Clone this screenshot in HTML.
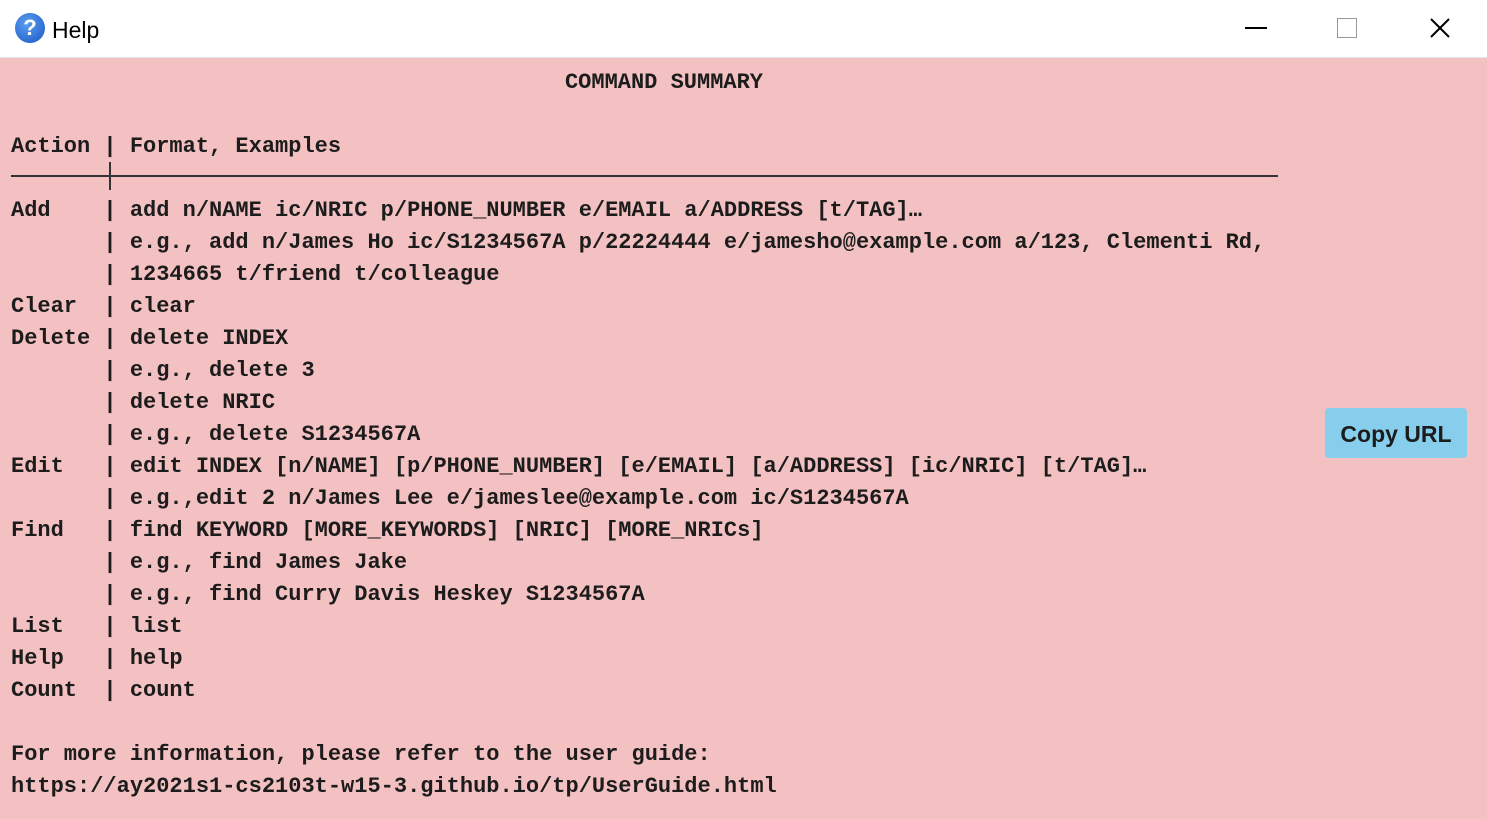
<!DOCTYPE html>
<html><head><meta charset="utf-8"><style>
body{margin:0;width:1487px;height:819px;overflow:hidden;background:#f3c1c2;font-family:"Liberation Sans",sans-serif;position:relative}
.tb{position:absolute;left:0;top:0;width:1487px;height:57px;background:#fff;border-bottom:1px solid #e6e6e6}
.tb .t{position:absolute;left:52px;top:17px;font-size:23px;color:#000}
.ic{position:absolute;left:15px;top:13px;width:30px;height:30px;border-radius:50%;background:radial-gradient(circle at 40% 35%,#5a9ff0,#1a56c4);color:#fff;font-weight:bold;font-size:22px;text-align:center;line-height:30px}
pre{position:absolute;left:11px;top:67px;margin:0;font-family:"Liberation Mono",monospace;font-weight:bold;font-size:22px;line-height:32px;color:#1c1c1c}
.ttl{position:absolute;top:67px;left:0;width:1328px;text-align:center;font-family:"Liberation Mono",monospace;font-weight:bold;font-size:22px;line-height:32px;color:#1c1c1c}
.hl{position:absolute;left:11px;top:175px;width:1267px;height:2px;background:#333}
.vl{position:absolute;left:109px;top:162px;width:2px;height:28px;background:#333}
.btn{position:absolute;left:1325px;top:408px;width:142px;height:50px;background:#87cdec;border-radius:4px;font-weight:bold;font-size:23px;color:#1c1c1c;text-align:center;line-height:52px}
</style></head><body>
<div class="tb"><div class="ic">?</div><div class="t">Help</div>
<svg style="position:absolute;left:1245px;top:27px" width="22" height="2"><rect width="22" height="2" fill="#000"/></svg>
<svg style="position:absolute;left:1337px;top:18px" width="20" height="20"><rect x="0.5" y="0.5" width="19" height="19" fill="none" stroke="#999"/></svg>
<svg style="position:absolute;left:1430px;top:18px" width="20" height="20"><path d="M1 1L19 19M19 1L1 19" stroke="#000" stroke-width="2"/></svg>
</div>
<div class="ttl">COMMAND SUMMARY</div>
<pre>


Action | Format, Examples

Add    | add n/NAME ic/NRIC p/PHONE_NUMBER e/EMAIL a/ADDRESS [t/TAG]…
       | e.g., add n/James Ho ic/S1234567A p/22224444 e/jamesho@example.com a/123, Clementi Rd,
       | 1234665 t/friend t/colleague
Clear  | clear
Delete | delete INDEX
       | e.g., delete 3
       | delete NRIC
       | e.g., delete S1234567A
Edit   | edit INDEX [n/NAME] [p/PHONE_NUMBER] [e/EMAIL] [a/ADDRESS] [ic/NRIC] [t/TAG]…
       | e.g.,edit 2 n/James Lee e/jameslee@example.com ic/S1234567A
Find   | find KEYWORD [MORE_KEYWORDS] [NRIC] [MORE_NRICs]
       | e.g., find James Jake
       | e.g., find Curry Davis Heskey S1234567A
List   | list
Help   | help
Count  | count

For more information, please refer to the user guide:
https://ay2021s1-cs2103t-w15-3.github.io/tp/UserGuide.html</pre>
<div class="hl"></div><div class="vl"></div>
<div class="btn">Copy URL</div>
</body></html>
